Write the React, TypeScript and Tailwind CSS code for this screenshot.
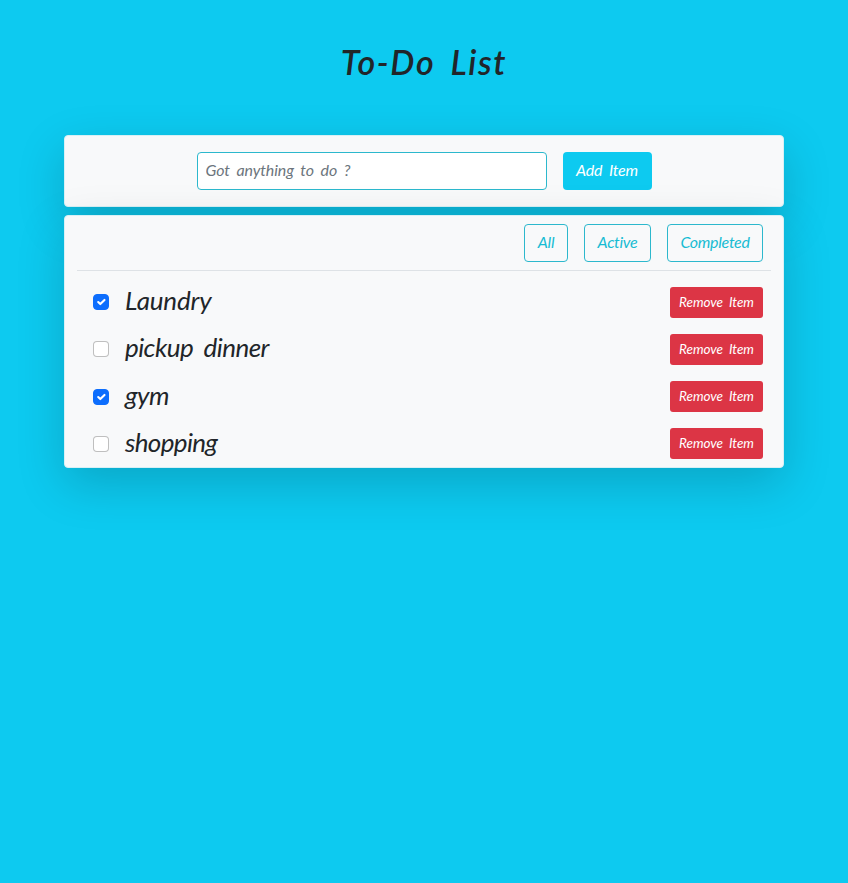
const todos = [
  { name: 'Laundry', done: true, font: 'tracking-[-0.2px] pb-1.5', box: 'mb-px' },
  { name: 'pickup dinner', done: false, font: 'tracking-[-0.55px] [word-spacing:5px] pb-1.5', box: 'mb-px' },
  { name: 'gym', done: true, font: 'tracking-[-0.5px] pb-1', box: '' },
  { name: 'shopping', done: false, font: 'tracking-[-0.65px] pb-1', box: '' },
];

const filters = [
  { name: 'All', size: 'w-11' },
  { name: 'Active', size: 'w-[67px]' },
  { name: 'Completed', size: 'w-24' },
];

function Checkbox({ checked, className }: { checked: boolean; className: string }) {
  return (
    <span
      role="checkbox"
      aria-checked={checked}
      className={`${className} size-4 shrink-0 rounded-[4px] border ${
        checked ? 'border-[#0d6efd] bg-[#0d6efd]' : 'border-black/25 bg-white'
      }`}
    >
      {checked && (
        <svg viewBox="0 0 20 20" className="block size-full" fill="none" stroke="#fff" strokeWidth="3" strokeLinecap="round" strokeLinejoin="round">
          <path d="M6 10l3 3l6-6" />
        </svg>
      )}
    </span>
  );
}

export default function App() {
  return (
    <div className="min-h-screen bg-[#0dcaf0] pt-[38px] font-['Lato',sans-serif] italic text-[#212529]">
      <h1 className="text-center text-[34px] leading-[48px] font-semibold tracking-[1.6px] [word-spacing:6px]">To-Do List</h1>
      <main className="mx-16 mt-[49px] flex flex-col gap-2">
        <section className="flex h-[72px] items-center justify-center gap-4 rounded-[4px] border border-[#d8f0f5] bg-[#f8f9fa] shadow-[0_16px_48px_rgba(0,0,0,0.175)]">
          <input
            placeholder="Got anything to do ?"
            className="h-[38px] w-[350px] rounded-[4px] border border-[#2cb8cd] bg-white px-2 pb-1 text-base tracking-[-0.1px] [word-spacing:3px] italic placeholder:text-[#6c757d]"
          />
          <button className="h-[38px] w-[89px] rounded-[4px] bg-[#0dcaf0] pb-0.5 text-base tracking-[-0.2px] [word-spacing:3px] text-white italic">Add Item</button>
        </section>
        <section className="h-[253px] rounded-[4px] border border-[#d8f0f5] bg-[#f8f9fa] px-3 pt-2 shadow-[0_16px_48px_rgba(0,0,0,0.175)]">
          <nav className="flex h-[47px] justify-end gap-4 border-b border-[#dee2e6] pr-2">
            {filters.map((f) => (
              <button key={f.name} className={`${f.size} h-[38px] rounded-[4px] border border-[#2cb8cd] pb-0.5 text-base tracking-[-0.3px] text-[#17bcd3] italic`}>
                {f.name}
              </button>
            ))}
          </nav>
          <ul className="flex flex-col gap-4 pt-4 pr-2 pl-4">
            {todos.map((t) => (
              <li key={t.name} className="flex h-[31px] items-center">
                <Checkbox checked={t.done} className={t.box} />
                <span className={`${t.font} ml-4 flex-1 text-[26px] leading-none`}>{t.name}</span>
                <button className="h-[31px] w-[93px] rounded-[3px] bg-[#dc3545] text-[13.5px] tracking-[-0.05px] [word-spacing:3px] text-white italic">Remove Item</button>
              </li>
            ))}
          </ul>
        </section>
      </main>
    </div>
  );
}
